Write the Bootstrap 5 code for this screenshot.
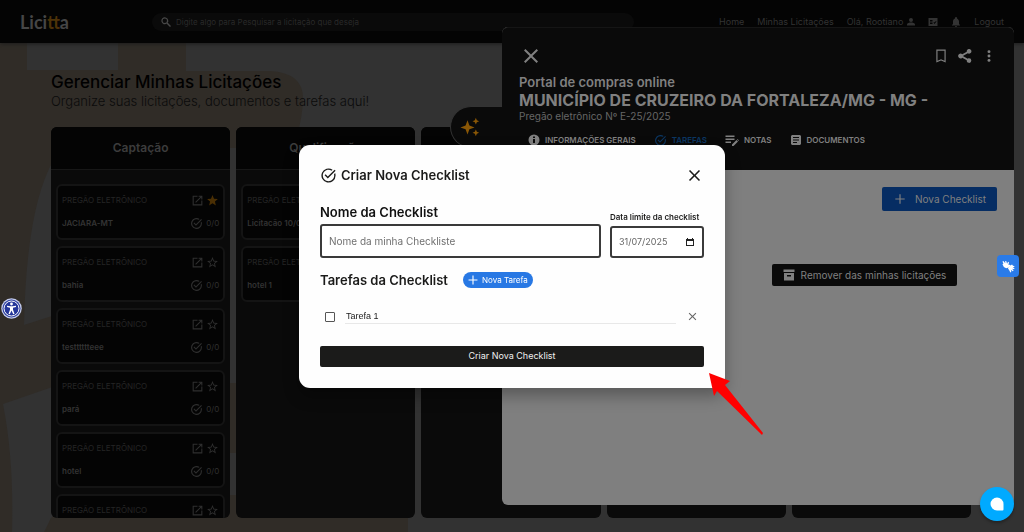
<!DOCTYPE html>
<html lang="pt-BR">
<head>
<meta charset="utf-8">
<meta name="viewport" content="width=device-width, initial-scale=1">
<title>Licitta</title>
<link href="https://cdn.jsdelivr.net/npm/bootstrap@5.3.0/dist/css/bootstrap.min.css" rel="stylesheet">
<style>
  body { font-family: Inter, "Open Sans", sans-serif; font-size: 10px; line-height: 14px; background: #323232; color: #000; overflow: hidden; }
  a { text-decoration: none; color: inherit; }
  svg { display: block; flex: none; }
  .ico { fill: currentColor; }
  .backdrop-art { position: absolute; left: 0; top: 0; z-index: -1; }

  /* top bar */
  .topbar { height: 43px; background: #040404; padding: 0 20px; color: #333; box-shadow: 0 1px 4px #1c1c1c; }
  .topbar nav { font-size: 9px; gap: 13px; }
  .brand { font: 700 18px/24px Lato, sans-serif; color: #464646; width: 132px; }
  .brand span { color: #4d3208; }
  .searchbar { width: 49%; height: 18px; border-radius: 9px; background: #0a0a0a; padding: 0 8px; gap: 4px; color: #484848; }
  .searchbar input { background: none; border: 0; font-size: 8px; flex: 1; padding: 0; outline: 0; }
  .searchbar input::placeholder { color: #292929; opacity: 1; }

  /* board */
  .board-page { padding: 29px 53px 14px 51px; }
  h1 { font-size: 17px; line-height: 20px; font-weight: 500; margin: 0; }
  .subtitle { font-size: 13px; line-height: 18px; font-weight: 300; color: #0b0b0b; margin: 0 0 17px; }
  .board { gap: 6px; min-height: 0; }
  .lane { flex: 1 1 0; min-width: 0; background: #0a0a0a; border-radius: 6px; overflow: hidden; }
  .lane h2 { height: 43px; line-height: 42px; font-size: 12px; font-weight: 600; color: #3c3c3c; background: #040404; border-bottom: 1px solid #171717; margin: 0; text-align: center; }
  .lane-body { padding: 14px 5px 0; gap: 6px; }
  .bid { height: 56px; flex: none; border: 2px solid #141414; border-radius: 6px; background: #040404; padding: 7px 4px 8px 4px; color: #2f2f2f; font-size: 8px; }
  .bid .kind { color: #242424; white-space: nowrap; }
  .bid .town { color: #333; font-weight: 600; white-space: nowrap; }
  .bid .count { gap: 3px; }
  .star-on { color: #4a2f04; }

  /* side panel */
  .drawer { position: fixed; top: 27px; right: 10px; bottom: 27px; width: 50%; border-radius: 6px; background: #7f7f7f; }
  .drawer-head { height: 143px; background: #0a0a0a; color: #808080; border-radius: 6px 6px 0 0; border-top: 1px solid #151515; padding: 18px 18px 0 17px; }
  .drawer-head h2 { font-size: 13px; line-height: 17px; font-weight: 600; margin: 8px 0 0; }
  .drawer-head h3 { font-size: 16px; line-height: 19px; font-weight: 700; margin: 0; white-space: nowrap; }
  .drawer-head p { font-size: 10px; line-height: 13px; color: #666; margin: 0; }
  .tabs { gap: 18px; margin: 10px 0 0 9px; font-size: 8px; font-weight: 600; }
  .tabs a { gap: 5px; }
  .tabs .current { color: #0c3763; }
  .ai-tab { position: absolute; left: -52px; top: 79px; width: 52px; height: 42px; border: 1px solid #333; border-right: 0; border-radius: 21px 0 0 21px; background: #0a0a0a; color: #8a5706; padding: 0 0 0 9px; }
  .drawer-body { padding: 17px 17px 0; }
  .flat-btn { border: 0; border-radius: 2px; font-size: 10px; color: #808080; }
  .btn-new { background: #062d63; width: 115px; height: 24px; gap: 8px; }
  .btn-remove { background: #0a0a0a; width: 185px; height: 22px; gap: 6px; margin: 53px 40px 0 0; }

  /* dialog */
  .dialog-layer { position: fixed; inset: 0; }
  .dialog-box { position: relative; width: 426px; border-radius: 11px; background: #fefefe; padding: 21px; box-shadow: 0 8px 16px rgba(0,0,0,.3); color: #1b1b1a; }
  .dialog-box h2 { font-size: 13px; line-height: 17px; font-weight: 600; margin: 0; }
  .dialog-head { gap: 4px; margin-bottom: 19px; }
  .plain { border: 0; background: none; padding: 0; color: inherit; }
  .big-label { font-size: 13px; line-height: 16px; font-weight: 600; margin-bottom: 4px; color: #111; display: block; }
  .small-label { font-size: 8px; line-height: 12px; font-weight: 600; margin-bottom: 3px; white-space: nowrap; }
  .box-field { border: 2px solid #3a3a3a; border-radius: 3px; font-size: 10px; color: #666; width: 100%; background: #fff; outline: 0; }
  .box-field::placeholder { color: #707070; opacity: 1; }
  .name-field { height: 34px; padding: 0 7px; }
  .date-wrap { position: relative; width: 94px; }
  .date-field { height: 32px; padding: 0 7px; font-size: 9px; }
  .date-wrap svg { position: absolute; right: 10px; bottom: 11px; }
  .task-head { gap: 15px; margin-top: 14px; }
  .pill { border: 0; border-radius: 8px; background: #2878e4; color: #fff; width: 70px; height: 16px; font-size: 8px; gap: 4px; padding: 0; }
  .task-row { margin: 17px 5px 18px 5px; gap: 10px; height: 22px; }
  .task-row input[type=checkbox] { appearance: none; width: 10px; height: 10px; border: 1px solid #555; border-radius: 1px; margin: 0; }
  .task-row input[type=text] { flex: 1; min-width: 0; height: 15px; border: 0; border-bottom: 1px solid #e8e8e8; background: none; font: 9px/12px "Liberation Sans", sans-serif; color: #222; padding: 0 0 1px 1px; outline: 0; }
  .task-row .plain { color: #666; }
  .submit { width: 100%; height: 21px; border: 0; border-radius: 2px; background: #1b1b1a; color: #f0f0f0; font-size: 9px; }
  .arrow { position: absolute; left: 409px; top: 227px; }

  /* floating helpers */
  .float-access { position: fixed; left: 1px; top: 298px; }
  .float-hands { position: fixed; right: 5px; top: 255px; width: 22px; height: 22px; border-radius: 4px; background: #2a7be8; color: #fff; }
  .float-chat { position: fixed; right: 10px; bottom: 11px; width: 34px; height: 34px; border-radius: 50%; background: #00aaff; color: #fff; box-shadow: 0 2px 3px rgba(0,0,0,.3); }
</style>
</head>
<body class="vh-100 d-flex flex-column">

<svg width="0" height="0" class="position-absolute" aria-hidden="true">
  <symbol id="i-check" viewBox="0 0 24 24"><path d="M22 5.2 20.600 3.800 11 13.400 7.900 10.300 6.500 11.700 11 16.200zM19.800 10.200c.13.57.2 1.180.2 1.800 0 4.420-3.580 8-8 8s-8-3.580-8-8 3.580-8 8-8c1.580 0 3.040.46 4.280 1.250l1.440-1.440A10 10 0 1 0 22 12c0-1.190-.22-2.330-.6-3.390z"/></symbol>
  <symbol id="i-open" viewBox="0 0 24 24"><path d="M19 19H5V5h7V3H3v18h18v-9h-2zM14 3v2h3.600l-9.830 9.830 1.410 1.410L19 6.400V10h2V3z"/></symbol>
  <symbol id="i-star" viewBox="0 0 24 24"><path d="m22 9.240-7.190-.62L12 2 9.190 8.630 2 9.240l5.460 4.730L5.820 21 12 17.270 18.180 21l-1.630-7.030zM12 15.400l-3.760 2.270 1-4.280-3.320-2.880 4.380-.38L12 6.100l1.710 4.040 4.380.38-3.320 2.880 1 4.280z"/></symbol>
  <symbol id="i-star-fill" viewBox="0 0 24 24"><path d="M12 17.270 18.180 21l-1.640-7.030L22 9.240l-7.190-.61L12 2 9.190 8.630 2 9.240l5.460 4.730L5.820 21z"/></symbol>
  <symbol id="i-x" viewBox="0 0 24 24"><path d="M19 6.410 17.590 5 12 10.590 6.410 5 5 6.410 10.590 12 5 17.590 6.410 19 12 13.410 17.590 19 19 17.590 13.410 12z"/></symbol>
  <symbol id="i-plus" viewBox="0 0 24 24"><path d="M20 13h-7v7h-2v-7H4v-2h7V4h2v7h7z"/></symbol>
</svg>

<svg class="backdrop-art" width="420" height="532" viewBox="0 0 420 532" aria-hidden="true">
  <path fill="#302c27" d="M0 0H270V71Q303 73 303 98Q303 115 296 140V532H0z"/>
  <path fill="#323232" d="M27 43H118V70H27zM186 43H420V71H186zM100 128Q28 130 24 325L80 307V128zM220 148H300V383H220zM3 404 90 374V480L51 518 44 532H12Q14 460 3 404zM230 453H300V495H230z"/>
  <path fill="#302c27" d="M51 518H408V532H46z"/>
</svg>

<header class="topbar d-flex align-items-center flex-shrink-0">
  <a href="#" class="brand">Lici<span>tt</span>a</a>
  <div class="searchbar d-flex align-items-center">
    <svg class="ico" width="12" height="12" viewBox="0 0 24 24"><path d="M16 14h-.8A7 7 0 1 0 14 15.200v.8l6 6 2-2zM9.500 14a4.500 4.500 0 1 1 0-9 4.500 4.500 0 0 1 0 9z"/></svg>
    <input type="search" aria-label="Pesquisar licitação" placeholder="Digite algo para Pesquisar a licitação que deseja">
  </div>
  <nav class="d-flex align-items-center ms-auto">
    <a href="#">Home</a>
    <a href="#">Minhas Licitações</a>
    <a href="#" class="d-flex align-items-center gap-1">Olá, Rootiano
      <svg class="ico" width="8" height="8" viewBox="0 0 16 16"><path d="M8 8a4 4 0 1 0 0-8 4 4 0 0 0 0 8zM0 15v-2c0-3 5-4 8-4s8 1 8 4v2z"/></svg></a>
    <a href="#" aria-label="Notícias"><svg class="ico" width="10" height="10" viewBox="0 0 20 20"><path fill-rule="evenodd" d="M1 2h18v16H1zM4 6v2h5V6zm0 3v2h5V9zm0 3v2h5v-2zm7-1 2 3 4-5-1-1-3 3-1-1z"/></svg></a>
    <a href="#" aria-label="Avisos"><svg class="ico" width="10" height="10" viewBox="0 0 20 20"><path d="M10 20a2 2 0 0 0 2-2H8a2 2 0 0 0 2 2zm6-6V9c0-3-2-5-4-6V2a2 2 0 0 0-4 0v1C5 4 4 6 4 9v5l-2 2v1h16v-1z"/></svg></a>
    <a href="#">Logout</a>
  </nav>
</header>

<main class="board-page d-flex flex-column flex-grow-1" style="min-height:0">
  <h1>Gerenciar Minhas Licitações</h1>
  <p class="subtitle">Organize suas licitações, documentos e tarefas aqui!</p>
  <div class="board d-flex flex-grow-1">
    <section class="lane"><h2>Captação</h2><div class="lane-body d-flex flex-column" id="lane-a"></div></section>
    <section class="lane"><h2>Qualificação</h2><div class="lane-body d-flex flex-column" id="lane-b"></div></section>
    <section class="lane"><h2></h2></section>
    <section class="lane"><h2></h2></section>
    <section class="lane"><h2></h2></section>
  </div>
</main>

<aside class="drawer">
  <div class="ai-tab d-flex align-items-center">
    <svg class="ico" width="20" height="20" viewBox="0 0 24 24"><path d="M9 4l2.300 6.200L17.500 12.500l-6.200 2.300L9 21l-2.300-6.200L.5 12.500l6.200-2.300zM19 1l1.200 2.800L23 5l-2.800 1.200L19 9l-1.200-2.800L15 5l2.800-1.200zM19 15l1.200 2.800L23 19l-2.800 1.200L19 23l-1.200-2.800L15 19l2.800-1.200z"/></svg>
  </div>
  <div class="drawer-head">
    <div class="d-flex align-items-center">
      <button class="plain" aria-label="Fechar"><svg class="ico" width="24" height="20" viewBox="2 2 20 20"><use href="#i-x" width="24" height="24"/></svg></button>
      <div class="d-flex ms-auto align-items-center" style="gap:10px">
        <svg class="ico" width="14" height="14" viewBox="0 0 24 24"><path d="M20 1H4v22l8-3.500 8 3.500zM18 20l-6-2.600L6 20V3h12z"/></svg>
        <svg class="ico" width="14" height="14" viewBox="0 0 24 24"><path d="M19 16c-1 0-1.600.3-2.200.8L8.900 12.600v-1.200l7.800-4.200A4 4 0 1 0 15 4l.1.900L7.300 9.200A4 4 0 1 0 7.300 14.800l7.800 4.300A3.900 3.900 0 1 0 19 16z"/></svg>
        <svg class="ico" width="14" height="14" viewBox="0 0 24 24"><circle cx="12" cy="4.500" r="2.500"/><circle cx="12" cy="12" r="2.500"/><circle cx="12" cy="19.500" r="2.500"/></svg>
      </div>
    </div>
    <h2>Portal de compras online</h2>
    <h3>MUNICÍPIO DE CRUZEIRO DA FORTALEZA/MG - MG -</h3>
    <p>Pregão eletrônico Nº E-25/2025</p>
    <nav class="tabs d-flex">
      <a href="#" class="d-flex align-items-center"><svg class="ico" width="12" height="12" viewBox="0 0 24 24"><path fill-rule="evenodd" d="M12 1a11 11 0 1 0 0 22 11 11 0 0 0 0-22zm2 17h-4v-8h4zm0-10h-4V5h4z"/></svg>INFORMAÇÕES GERAIS</a>
      <a href="#" class="current d-flex align-items-center"><svg class="ico" width="13" height="13"><use href="#i-check"/></svg>TAREFAS</a>
      <a href="#" class="d-flex align-items-center"><svg class="ico" width="14" height="13" viewBox="0 0 28 26"><path d="M1 3h18v3H1zM1 9h18v3H1zM1 15h11v3H1zM14 21l9-9 3 3-9 9h-3zM24 11l1-1 3 3-1 1z"/></svg>NOTAS</a>
      <a href="#" class="d-flex align-items-center"><svg class="ico" width="12" height="12" viewBox="0 0 24 24"><path fill-rule="evenodd" d="M4 2h16l2 2v16l-2 2H4l-2-2V4zM6 6v2h12V6zm0 5v2h12v-2zm0 5v2h8v-2z"/></svg>DOCUMENTOS</a>
    </nav>
  </div>
  <div class="drawer-body d-flex flex-column align-items-end">
    <button class="flat-btn btn-new d-flex align-items-center justify-content-center"><svg class="ico" width="14" height="14"><use href="#i-plus"/></svg>Nova Checklist</button>
    <button class="flat-btn btn-remove d-flex align-items-center justify-content-center"><svg class="ico" width="12" height="12" viewBox="0 0 24 24"><path fill-rule="evenodd" d="M1 1h22v5H1zM2 8h20v15H2zM8 12v3h8v-3z"/></svg>Remover das minhas licitações</button>
  </div>
</aside>

<div class="dialog-layer d-flex align-items-center justify-content-center">
  <form class="dialog-box" role="dialog" aria-labelledby="dlg-title">
    <div class="dialog-head d-flex align-items-center">
      <svg class="ico" width="17" height="17"><use href="#i-check"/></svg>
      <h2 id="dlg-title">Criar Nova Checklist</h2>
      <button type="button" class="plain ms-auto" aria-label="Fechar"><svg class="ico" width="19" height="19"><use href="#i-x"/></svg></button>
    </div>
    <div class="d-flex align-items-end" style="gap:9px">
      <div class="flex-grow-1">
        <label class="big-label" for="f-name">Nome da Checklist</label>
        <input class="box-field name-field d-block" id="f-name" type="text" placeholder="Nome da minha Checkliste">
      </div>
      <div class="date-wrap">
        <label class="small-label d-block" for="f-date">Data limite da checklist</label>
        <input class="box-field date-field d-block" id="f-date" type="text" value="31/07/2025">
        <svg width="8" height="9" viewBox="0 0 8 9" fill="#222"><path fill-rule="evenodd" d="M0 1h1V0h1v1h4V0h1v1h1v7H0zM1 3v4h6V3z"/></svg>
      </div>
    </div>
    <div class="task-head d-flex align-items-center">
      <h2>Tarefas da Checklist</h2>
      <button type="button" class="pill d-flex align-items-center justify-content-center"><svg class="ico" width="10" height="10" viewBox="3 3 18 18"><use href="#i-plus" width="24" height="24"/></svg>Nova Tarefa</button>
    </div>
    <div class="task-row d-flex align-items-center">
      <input type="checkbox" aria-label="Concluir Tarefa 1">
      <input type="text" aria-label="Tarefa" value="Tarefa 1">
      <button type="button" class="plain" aria-label="Remover tarefa"><svg class="ico" width="13" height="13"><use href="#i-x"/></svg></button>
    </div>
    <button type="submit" class="submit">Criar Nova Checklist</button>
    <svg class="arrow" width="56" height="64" viewBox="0 0 56 64" aria-hidden="true"><path fill="#f00" d="M1 1 22 9 17 13 55 61 54 63 9 19 6 24z"/></svg>
  </form>
</div>

<button class="plain float-access" aria-label="Acessibilidade"><svg width="21" height="21" viewBox="0 0 42 42"><circle cx="21" cy="21" r="20.500" fill="#c4ccec"/><circle cx="21" cy="21" r="18" fill="#25379a"/><circle cx="21" cy="21" r="15" fill="none" stroke="#fff" stroke-width="2"/><g fill="#fff"><circle cx="21" cy="12" r="2.800"/><path d="M12 15.500l7 1h4l7-1v2.500l-6 1.300v4l3 8-2.500 1L21 25l-3.500 7.300-2.500-1 3-8v-4l-6-1.300z"/></g></svg></button>
<button class="plain float-hands d-flex align-items-center justify-content-center" aria-label="Libras"><svg class="ico" width="13" height="13" viewBox="0 0 28 28"><path d="M3 2l4 5 0-5 2 0 2 6 2-4 2 1-1 6 3-1 1 2-4 4-5 2-5-3-3-6 2-1-2-5z"/><path d="M14 15l6-5 5 1-3 2 5 0-1 2-3 1 4 2-1 2-4-1 3 4-2 1-4-3 1 5-2 1-3-6-2-2z"/></svg></button>
<button class="plain float-chat d-flex align-items-center justify-content-center" aria-label="Conversar"><svg class="ico" width="14" height="14" viewBox="0 0 14 14"><path d="M7 0.500A6.500 6.500 0 0 1 13.500 7v5.500a1 1 0 0 1-1 1H7A6.500 6.500 0 0 1 7 .5z"/></svg></button>

<template id="bid-card">
  <article class="bid d-flex flex-column justify-content-between">
    <div class="d-flex align-items-center">
      <span class="kind">PREGÃO ELETRÔNICO</span>
      <svg class="ico ms-auto" width="13" height="13"><use href="#i-open"/></svg>
      <svg class="ico star" width="13" height="13" style="margin-left:2px"><use href="#i-star"/></svg>
    </div>
    <div class="bid-foot d-flex align-items-center">
      <span class="town"></span>
      <span class="count d-flex align-items-center ms-auto"><svg class="ico" width="13" height="13"><use href="#i-check"/></svg>0/0</span>
    </div>
  </article>
</template>

<script src="https://cdn.jsdelivr.net/npm/bootstrap@5.3.0/dist/js/bootstrap.bundle.min.js"></script>
<script>
  // a null town is a card whose details have not loaded yet
  const lanes = {
    'lane-a': ['JACIARA-MT', 'bahia', 'testttttteee', 'pará', 'hotel', null],
    'lane-b': ['Licitacão 10/07', 'hotel 1']
  };
  for (const [id, towns] of Object.entries(lanes)) {
    towns.forEach(town => {
      const card = document.getElementById('bid-card').content.cloneNode(true);
      if (town) card.querySelector('.town').textContent = town;
      else card.querySelector('.bid-foot').replaceChildren();
      if (town === 'JACIARA-MT') {
        const star = card.querySelector('.star');
        star.classList.add('star-on');
        star.firstElementChild.setAttribute('href', '#i-star-fill');
      }
      document.getElementById(id).append(card);
    });
  }
</script>
</body>
</html>
